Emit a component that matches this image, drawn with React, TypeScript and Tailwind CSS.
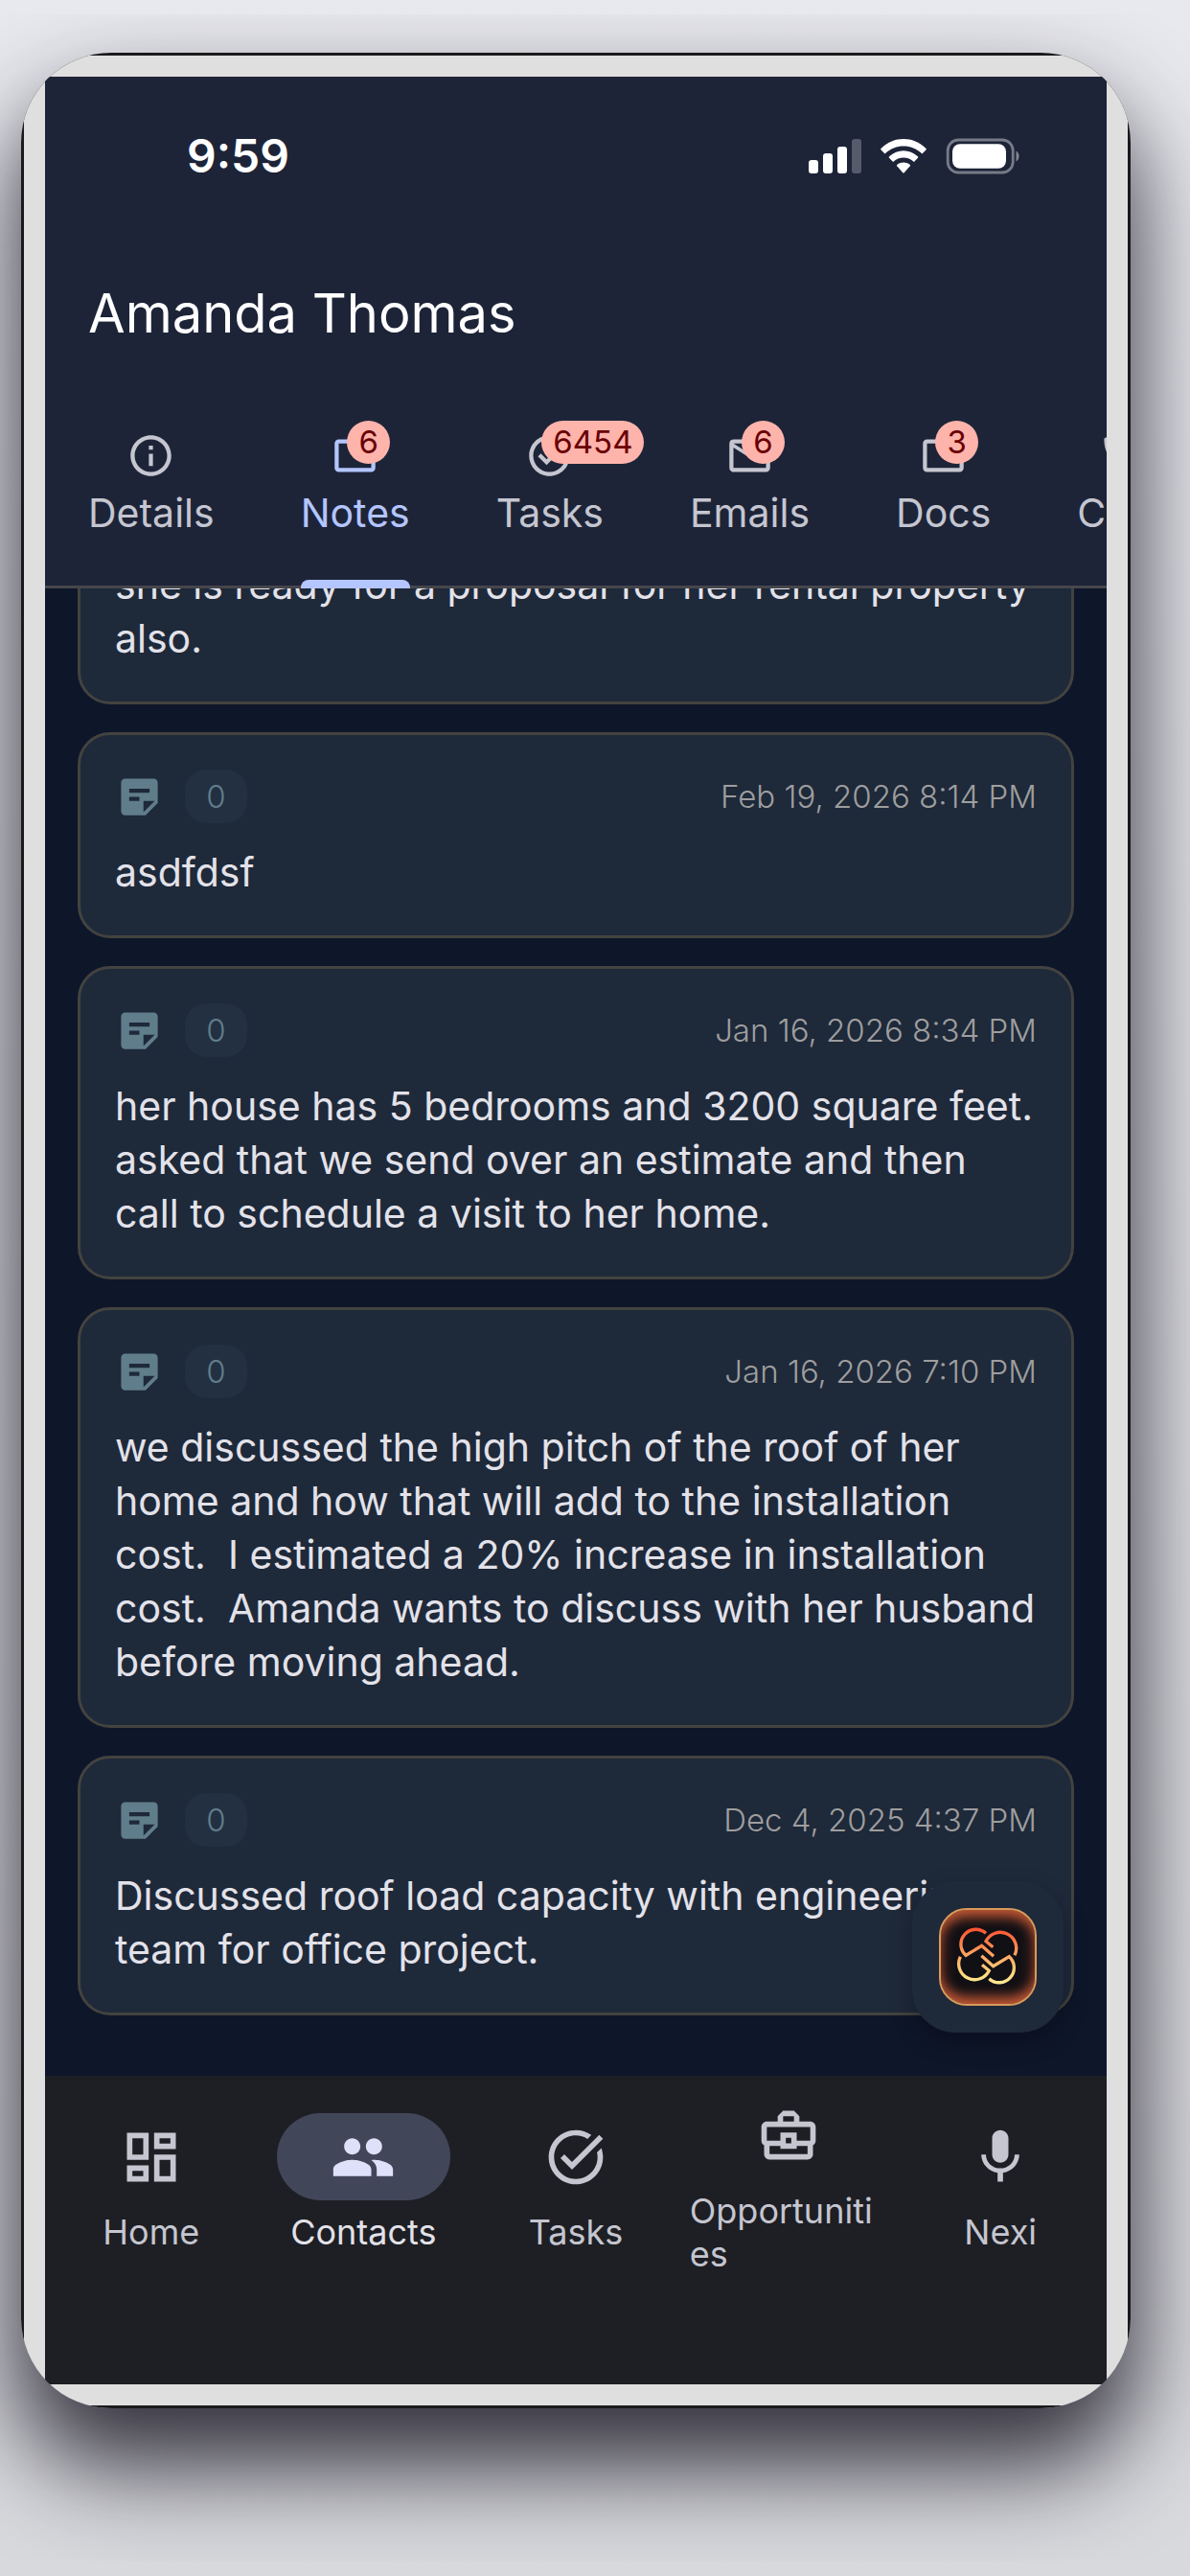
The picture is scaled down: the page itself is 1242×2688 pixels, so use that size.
import type { ReactNode } from "react";
import type { IconType } from "react-icons";
import {
  MdInfoOutline,
  MdMic,
  MdOutlineBusinessCenter,
  MdOutlineDashboard,
  MdOutlineEmail,
  MdOutlineFolder,
  MdOutlinePhone,
  MdPeople,
  MdStickyNote2,
  MdTaskAlt,
} from "react-icons/md";

type Tab = { label: string; icon: ReactNode; badge?: string; active?: boolean };
type Note = { date?: string; text: string };
type NavItem = { label: string; icon: IconType; active?: boolean };

function NoteOutline() {
  return (
    <svg viewBox="0 0 24 24" className="size-full" fill="none" stroke="currentColor" strokeWidth="2" aria-hidden="true">
      <rect x="3" y="5" width="18" height="14" rx="1" />
    </svg>
  );
}

const tabs: Tab[] = [
  { label: "Details", icon: <MdInfoOutline className="size-full" /> },
  { label: "Notes", icon: <NoteOutline />, badge: "6", active: true },
  { label: "Tasks", icon: <MdTaskAlt className="size-full" />, badge: "6454" },
  { label: "Emails", icon: <MdOutlineEmail className="size-full" />, badge: "6" },
  { label: "Docs", icon: <MdOutlineFolder className="size-full" />, badge: "3" },
  { label: "Calls", icon: <MdOutlinePhone className="size-full" /> },
];

const notes: Note[] = [
  { text: "she is ready for a proposal for her rental property also." },
  { date: "Feb 19, 2026 8:14 PM", text: "asdfdsf" },
  {
    date: "Jan 16, 2026 8:34 PM",
    text: "her house has 5 bedrooms and 3200 square feet. asked that we send over an estimate and then call to schedule a visit to her home.",
  },
  {
    date: "Jan 16, 2026 7:10 PM",
    text: "we discussed the high pitch of the roof of her home and how that will add to the installation cost.  I estimated a 20% increase in installation cost.  Amanda wants to discuss with her husband before moving ahead.",
  },
  {
    date: "Dec 4, 2025 4:37 PM",
    text: "Discussed roof load capacity with engineering team for office project.",
  },
];

const navItems: NavItem[] = [
  { label: "Home", icon: MdOutlineDashboard },
  { label: "Contacts", icon: MdPeople, active: true },
  { label: "Tasks", icon: MdTaskAlt },
  { label: "Opportunities", icon: MdOutlineBusinessCenter },
  { label: "Nexi", icon: MdMic },
];

function StatusBar() {
  return (
    <div className="flex h-[166px] items-center justify-between pr-[90px] pl-[148px]">
      <span className="text-[48px] leading-none font-semibold text-white">9:59</span>
      <div className="flex items-center text-white">
        <svg viewBox="0 0 55 36" className="h-9 w-[55px]" fill="currentColor" aria-label="Signal">
          <rect x="0" y="22" width="10" height="14" rx="3" />
          <rect x="15" y="15" width="10" height="21" rx="3" />
          <rect x="30" y="8" width="10" height="28" rx="3" />
          <rect x="45" y="0" width="10" height="36" rx="3" opacity="0.25" />
        </svg>
        <svg viewBox="0 0 48 36" className="ml-5 h-9 w-12" fill="currentColor" aria-label="Wi-Fi">
          <path d="M.6 11.4Q-.2 10.6.7 9.8C14-3.200 34-3.200 47.300 9.800Q48.200 10.600 47.400 11.400L43.400 15.400C32 4.900 16 4.900 4.600 15.400Z" />
          <path d="M9 19.800Q8.300 19 9.100 18.200C17.500 10.200 30.500 10.200 38.900 18.200Q39.700 19 39 19.800L34.900 23.900C28.500 18 19.500 18 13.100 23.900Z" />
          <path d="M17.200 28.200Q16.600 27.500 17.400 26.800C21.200 23.700 26.800 23.700 30.600 26.800Q31.400 27.500 30.800 28.200L24.700 35.200Q24 36 23.300 35.200Z" />
        </svg>
        <svg viewBox="0 0 78 38" className="ml-5 h-[38px] w-[78px]" aria-label="Battery">
          <rect x="2.200" y="2" width="68" height="34" rx="11" fill="none" stroke="currentColor" strokeWidth="2.800" opacity="0.400" />
          <path d="M73.500 13.500a6.500 6.500 0 0 1 0 11Z" fill="currentColor" opacity="0.450" />
          <rect x="7" y="6.200" width="56" height="25.600" rx="8" fill="currentColor" />
        </svg>
      </div>
    </div>
  );
}

function TabBar() {
  return (
    <nav className="relative flex overflow-hidden after:absolute after:inset-x-0 after:bottom-0 after:h-[3px] after:bg-[#46464b]">
      {tabs.map((tab) => (
        <button
          key={tab.label}
          type="button"
          className={`flex shrink-0 flex-col items-center px-[45px] pt-[42px] ${tab.active ? "text-[#b4c5ff]" : "text-[#c5c6d0]"}`}
        >
          <span className="relative size-[51px]">
            {tab.icon}
            {tab.badge && (
              <span className="absolute -top-[11px] left-[17px] flex h-[45px] min-w-[45px] items-center justify-center rounded-full bg-[#ffb4ab] px-3 text-[33px] leading-none text-[#690005]">
                {tab.badge}
              </span>
            )}
          </span>
          <span className="relative mt-1.5 pb-[51px] text-[41px] leading-[56px]">
            {tab.label}
            {tab.active && (
              <span className="absolute inset-x-0 bottom-0 z-10 h-[9px] rounded-t-lg bg-[#b4c5ff]" />
            )}
          </span>
        </button>
      ))}
    </nav>
  );
}

function NoteCard({ note }: { note: Note }) {
  return (
    <article className="shrink-0 rounded-[34px] border-[3px] border-[#43433f] bg-[#1e293a] pt-9 pb-[38px] pl-9 pr-9">
      {note.date && (
        <div className="mb-[23px] flex items-center">
          <MdStickyNote2 className="size-[51px] text-[#607d8b]" />
          <span className="ml-[22px] flex h-14 w-[65px] items-center justify-center rounded-[22px] bg-[#223041] text-[33px] leading-none font-light text-[#607d8b]">
            0
          </span>
          <time className="ml-auto text-[33px] leading-none font-light text-[#9e9e9e]">{note.date}</time>
        </div>
      )}
      <p className="text-[41px] leading-[56px] whitespace-pre-wrap text-[#e3e2e9]">{note.text}</p>
    </article>
  );
}

function AssistantButton() {
  return (
    <button
      type="button"
      aria-label="Assistant"
      className="absolute right-[45px] bottom-[45px] flex size-[158px] items-center justify-center rounded-[45px] bg-[#1e293a] shadow-[0_10px_24px_rgba(0,0,0,0.3)]"
    >
      <span className="size-[102px] rounded-[29px] border-2 border-[#d89a5c] bg-[#111015] shadow-[inset_0_14px_14px_-8px_#c65a35,inset_0_-14px_14px_-8px_#c65a35,inset_0_0_16px_#8a3c28]">
        <svg viewBox="247 217 294 294" className="size-full" fill="none" stroke="url(#knot)" strokeWidth="10" aria-hidden="true">
          <defs>
            <linearGradient id="knot" gradientUnits="userSpaceOnUse" x1="0" y1="275" x2="0" y2="448">
              <stop offset="0" stopColor="#ff5330" />
              <stop offset="0.500" stopColor="#ffa863" />
              <stop offset="0.850" stopColor="#ffdc7c" />
              <stop offset="1" stopColor="#ffe995" />
            </linearGradient>
          </defs>
          <path d="M388 290A46 46 0 0 0 325 359L375 329L412 362" />
          <path d="M410 333L388 315A49 49 0 1 1 478 359" />
          <path d="M376 389L398 407A49 49 0 1 1 308 363" />
          <path d="M398 432A46 46 0 0 0 461 363L411 393L374 360" />
        </svg>
      </span>
    </button>
  );
}

function BottomNav() {
  return (
    <nav className="bg-[#1e1f24] pb-[97px]">
      <div className="flex h-[225px] items-center">
        {navItems.map(({ label, icon: Icon, active }) => (
          <button key={label} type="button" className="flex min-w-0 flex-1 flex-col items-center px-2">
            <span
              className={`flex h-[91px] w-[181px] items-center justify-center rounded-full ${active ? "bg-[#424659] text-[#dee1f9]" : "text-[#c5c6d0]"}`}
            >
              <Icon className="size-[68px]" />
            </span>
            <span
              className={`mt-[11px] max-w-full text-left text-[36px] leading-[45px] break-all ${active ? "text-[#e3e2e9]" : "text-[#c5c6d0]"}`}
            >
              {label}
            </span>
          </button>
        ))}
      </div>
    </nav>
  );
}

export default function App() {
  return (
    <div className="h-screen bg-linear-to-b from-[#e8e9ee] to-[#d8d9dd] pt-[15px] pb-4 font-['Inter',sans-serif]">
      <div className="h-full overflow-hidden pt-10 pr-[62px] pb-[159px] pl-[22px]">
        <div className="h-full rounded-[94px] shadow-[0_56px_100px_4px_rgba(20,18,30,0.85)]">
          <div className="h-full overflow-hidden rounded-[94px] bg-[#1a191c] p-[3px]">
            <div className="h-full bg-[#dfdfdf] p-[22px]">
              <main className="flex h-full flex-col overflow-hidden bg-[#0e162a]">
                <header className="bg-[#1d2438]">
                  <StatusBar />
                  <h1 className="flex h-[162px] items-center px-[45px] text-[56px] leading-none text-white">
                    Amanda Thomas
                  </h1>
                  <TabBar />
                </header>
                <div className="relative min-h-0 flex-1">
                  <section className="flex h-full flex-col justify-end gap-[29px] overflow-hidden px-[34px] pb-[63px]">
                    {notes.map((note) => (
                      <NoteCard key={note.text} note={note} />
                    ))}
                  </section>
                  <AssistantButton />
                </div>
                <BottomNav />
              </main>
            </div>
          </div>
        </div>
      </div>
    </div>
  );
}
